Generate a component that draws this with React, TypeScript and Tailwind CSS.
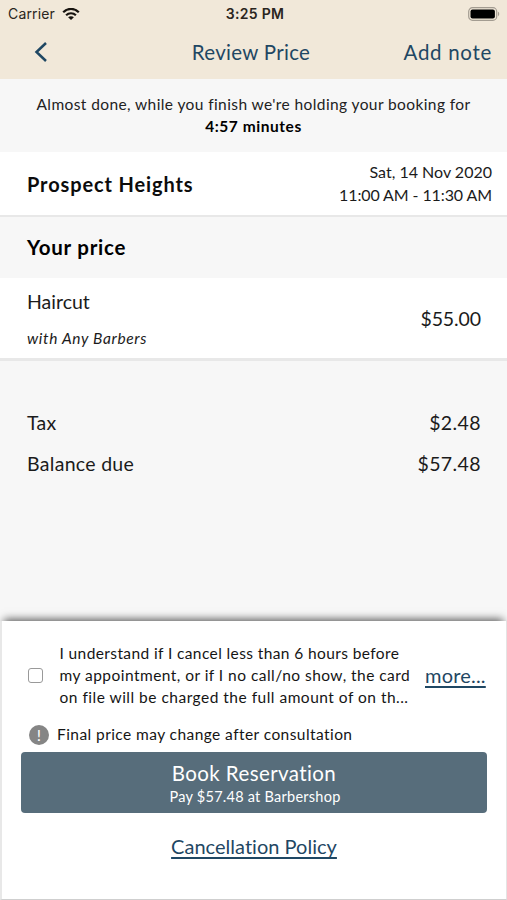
import type { ReactNode } from "react";

function StatusBar() {
  return (
    <div className="flex h-7 items-center justify-between pr-[7px] pl-[8px] font-['Inter',sans-serif] text-[14px] leading-7 text-[#2a2520]">
      <div className="flex flex-1 items-center gap-[7px]">
        <span className="tracking-[0.15px]">Carrier</span>
        <svg width="18" height="13" viewBox="0 0 18 13" fill="none" stroke="#17130f" strokeWidth="2.2">
          <path d="M1.2 4.2C5.5-.2 12.500-.2 16.800 4.200" />
          <path d="M4.100 7.200C6.800 4.600 11.200 4.600 13.900 7.200" />
          <path d="M9 12.100L6.100 9.200C7.700 7.800 10.300 7.800 11.900 9.200Z" fill="#17130f" stroke="none" />
        </svg>
      </div>
      <span className="pl-[2px] font-semibold tracking-[0.3px]">3:25 PM</span>
      <div className="flex flex-1 justify-end">
        <svg width="32" height="14" viewBox="0 0 32 14">
          <rect x="0.700" y="0.700" width="28" height="12.600" rx="3.800" fill="none" stroke="#a39c91" strokeWidth="1.200" />
          <rect x="2.500" y="2.500" width="24.400" height="9" rx="2" fill="#000" />
          <path d="M30 4.800C31.600 5.400 31.600 8.600 30 9.200Z" fill="#a39c91" />
        </svg>
      </div>
    </div>
  );
}

function Header() {
  return (
    <header className="h-[79px] bg-[#f1e8d9]">
      <StatusBar />
      <div className="flex h-[48px] items-center pr-[15px] pl-[10px] text-[20.5px] text-[#1f4763]">
        <div className="flex flex-1 items-center">
          <svg className="ml-[24px]" width="14" height="22" viewBox="0 0 14 22" fill="none" stroke="#1f4763" strokeWidth="2.500">
            <path d="M12 2L2.500 11L12 20" />
          </svg>
        </div>
        <h1 className="tracking-[0.3px]">Review Price</h1>
        <div className="flex-1 text-right tracking-[0.7px]">Add note</div>
      </div>
    </header>
  );
}

function TotalRow({ label, value }: { label: ReactNode; value: ReactNode }) {
  return (
    <div className="flex h-[41px] items-center justify-between pr-[26px] pl-[27px] text-[19.5px] text-[#1b1b1b]">
      <span className="tracking-[0.3px]">{label}</span>
      <span className="tracking-[0.4px]">{value}</span>
    </div>
  );
}

export default function App() {
  return (
    <div className="flex h-[900px] w-[507px] flex-col overflow-hidden bg-[#f7f7f7] font-['Lato',sans-serif] whitespace-nowrap [font-variant-ligatures:none]">
      <Header />
      <div className="flex h-[73px] flex-col items-center pt-[14px] text-[15.5px] leading-[22px] text-[#222]">
        <p className="tracking-[0.4px]">Almost done, while you finish we're holding your booking for</p>
        <p className="font-bold tracking-[0.55px] text-black">4:57 minutes</p>
      </div>
      <div className="flex h-[65px] items-center justify-between border-b-2 border-[#e8e8e8] bg-white pr-[15px] pl-[27px]">
        <h2 className="text-[20px] font-bold tracking-[0.88px] text-[#0c0c0c]">Prospect Heights</h2>
        <div className="pb-[2px] text-right text-[16px] leading-[23px] text-[#1b1b1b]">
          <p className="tracking-[0px]">Sat, 14 Nov 2020</p>
          <p className="tracking-[-0.1px]">11:00 AM - 11:30 AM</p>
        </div>
      </div>
      <div className="flex h-[61px] items-center pl-[27px]">
        <h2 className="text-[20.500px] font-bold tracking-[0.75px] text-black">Your price</h2>
      </div>
      <div className="flex h-[83px] items-center justify-between border-b-[3px] border-[#e8e8e8] bg-white pr-[26px] pl-[27px] text-[19.5px] text-[#1b1b1b]">
        <div className="pt-[4px]">
          <p className="leading-[36px] tracking-[0px]">Haircut</p>
          <p className="text-[15.5px] leading-[36px] tracking-[0.65px] italic">with Any Barbers</p>
        </div>
        <span className="pt-[2px] tracking-[-0.1px]">$55.00</span>
      </div>
      <div className="flex-1 pt-[41px]">
        <TotalRow label="Tax" value="$2.48" />
        <TotalRow label="Balance due" value="$57.48" />
      </div>
      <section className="h-[279px] shrink-0 border-r border-b border-l-2 border-r-[#e4e4e4] border-b-[#cfcfcf] border-l-[#e8e8e8] bg-white shadow-[0_-6px_8px_-4px_rgba(0,0,0,0.62)]">
        <div className="flex h-[100px] items-center pt-[9px] pl-[26px]">
          <span className="size-[15px] shrink-0 rounded-[3px] border-[1.500px] border-[#999]" />
          <div className="ml-[16.500px] w-[365.500px] pb-[2px] text-[15.500px] leading-[22px] text-[#151515]">
            <p className="tracking-[0.39px]">I understand if I cancel less than 6 hours before</p>
            <p className="tracking-[0.46px]">my appointment, or if I no call/no show, the card</p>
            <p className="tracking-[0.49px]">on file will be charged the full amount of on th...</p>
          </div>
          <a className="pb-[2px] text-[20px] tracking-[0.2px] text-[#1f4763] underline decoration-[1.500px] underline-offset-[3px]">more...</a>
        </div>
        <div className="flex h-[30px] items-center pb-[2px] pl-[27px] text-[15.500px] text-[#151515]">
          <span className="flex size-[20px] items-center justify-center rounded-full bg-[#858585] text-[16px] leading-none text-white">!</span>
          <span className="ml-[8px] tracking-[0.43px]">Final price may change after consultation</span>
        </div>
        <button className="mt-px ml-[19px] flex h-[61px] w-[466px] flex-col items-center justify-center rounded-[4px] bg-[#576d7b] pt-[2px] text-white">
          <span className="text-[20.500px] leading-[26px] tracking-[0.4px]">Book Reservation</span>
          <span className="pt-px pl-[2px] text-[14.500px] leading-[20px] tracking-[0.25px]">Pay $57.48 at Barbershop</span>
        </button>
        <div className="flex h-[66px] items-center justify-center text-[20px] text-[#1f4763]">
          <a className="tracking-[0.02px] underline decoration-[1.500px] underline-offset-[3px]">Cancellation Policy</a>
        </div>
      </section>
    </div>
  );
}
